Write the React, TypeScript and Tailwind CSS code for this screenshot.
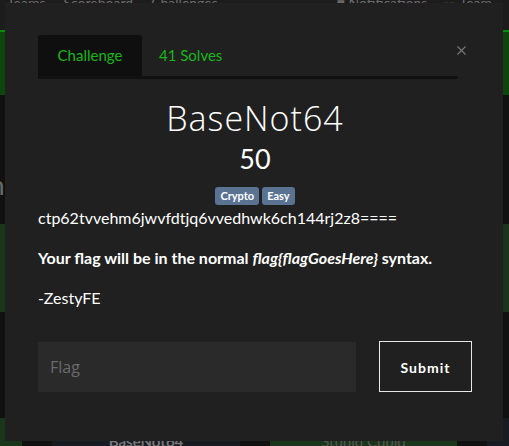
import { X } from "lucide-react";

function Backdrop() {
  return (
    <div className="flex h-full w-full flex-col bg-[#111111]">
      <div className="flex h-[30px] items-start justify-between bg-[#1c1c1c] px-[7px] text-[14px] leading-[6px] text-[#6a6a6a]">
        <div className="flex gap-[18px]">
          <span>Teams</span>
          <span>Scoreboard</span>
          <span>Challenges</span>
        </div>
        <div className="flex gap-[16px] pr-[10px]">
          <span>■ Notifications</span>
          <span>☷ Team</span>
        </div>
      </div>
      <div className="h-[65px] border-t-[2px] border-[#0a8a0a] bg-[#0c460c]" />
      <div className="flex h-[129px] items-end pb-[26px]">
        <span className="-ml-[10px] text-[26px] leading-none text-[#6b6b6b]">ne</span>
      </div>
      <div className="h-[88px] bg-[#1a361a]" />
      <div className="h-[106px]" />
      <div className="flex h-[28px] bg-[#1a361a] pl-[22px]">
        <div className="w-[30px] bg-[#111111]" />
        <div className="flex w-[188px] justify-center bg-[#181b22] text-[15px] font-bold leading-[46px] text-[#777]">BaseNot64</div>
        <div className="w-[30px] bg-[#111111]" />
        <div className="flex w-[187px] justify-center bg-[#1a361a] text-[15px] leading-[46px] text-[#555]">Stupid Cupid</div>
        <div className="w-[30px] bg-[#111111]" />
        <div className="flex-1 bg-[#181b22]" />
      </div>
    </div>
  );
}

export default function App() {
  return (
    <div className="relative h-[446px] w-[509px] overflow-hidden font-['Lato',sans-serif]">
      <Backdrop />
      {/* modal */}
      <div className="absolute left-[5px] top-[3px] h-[438px] w-[498px] bg-[#202020] pl-[33px] pr-[31px] pt-[32px] text-white">
        <div className="relative flex w-[420px] border-b-[3px] border-[#111111]">
          <div className="flex h-[41px] w-[104px] items-center justify-center rounded-t-[3px] bg-[#0f0f0f] text-[15px] text-[#19b719]">
            Challenge
          </div>
          <div className="flex h-[41px] items-center px-[17px] text-[15px] text-[#19b719]">41 Solves</div>
          <X className="absolute -right-[11px] top-[8px] text-[#7a7a7a]" size={15} strokeWidth={1.8} />
        </div>
        <h1 className="mt-[18px] text-center font-['Open_Sans',sans-serif] text-[34px] font-light leading-[42px] tracking-[1px]">
          BaseNot64
        </h1>
        <div className="mt-[3px] text-center text-[27px] leading-[34px]">50</div>
        <div className="mt-[11px] flex justify-center gap-[3px]">
          <span className="rounded-[3px] bg-[#5a7393] px-[5px] text-[11px] font-bold leading-[18px]">Crypto</span>
          <span className="rounded-[3px] bg-[#5a7393] px-[5px] text-[11px] font-bold leading-[18px]">Easy</span>
        </div>
        <p className="mt-[1px] text-[16px] leading-[24px]">ctp62tvvehm6jwvfdtjq6vvedhwk6ch144rj2z8====</p>
        <p className="mt-[16px] text-[16px] font-bold leading-[24px]">
          Your flag will be in the normal <em>flag{"{flagGoesHere}"}</em> syntax.
        </p>
        <p className="mt-[16px] text-[16px] leading-[24px]">-ZestyFE</p>
        <div className="mt-[31px] flex items-center justify-between">
          <input
            placeholder="Flag"
            className="h-[50px] w-[318px] bg-[#2a2a2a] px-[12px] font-['Open_Sans',sans-serif] text-[16px] text-white outline-none placeholder:text-[#6b6b6b]"
          />
          <button className="h-[51px] w-[93px] border border-[#e8e8e8] pt-[2px] text-[14px] font-bold tracking-[1px] text-white">
            Submit
          </button>
        </div>
      </div>
    </div>
  );
}
